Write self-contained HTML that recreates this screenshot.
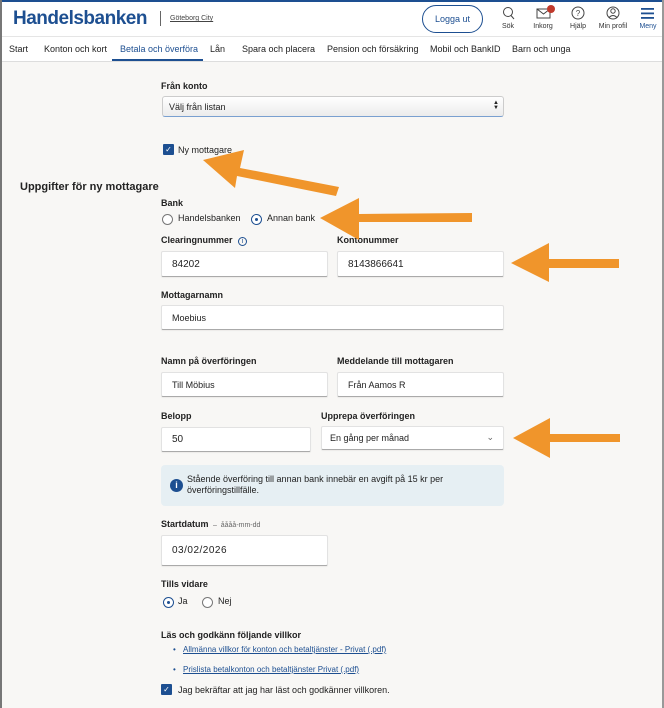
<!DOCTYPE html>
<html><head><meta charset="utf-8"><style>
*{margin:0;padding:0;box-sizing:border-box}
body{width:664px;height:708px;overflow:hidden;background:#f8f7f5;font-family:"Liberation Sans",Arial,sans-serif;color:#222;position:relative}
.a{position:absolute;white-space:nowrap}
.hdr{left:0;top:0;width:664px;height:37px;background:#fff;border-top:2px solid #1d4f91;border-bottom:1px solid #e5e5e5}
.nav{left:0;top:37px;width:664px;height:25px;background:#fff;border-bottom:1px solid #ddd;font-size:9px}
.lbl{font-size:9px;font-weight:bold;color:#222}
.inp{background:#fff;border:1px solid #e2e2e2;border-bottom:1px solid #aaa;border-radius:2px;font-size:10px;padding-left:10px;display:flex;align-items:center;box-shadow:0 1px 1px rgba(0,0,0,.05)}
.ic{font-size:7px;color:#333;text-align:center;width:40px}
.rad{width:11px;height:11px;border:1px solid #777;border-radius:50%;background:#fff}
.rad.on{border-color:#1d4f91}
.rad.on::after{content:"";position:absolute;left:3px;top:3px;width:3px;height:3px;border-radius:50%;background:#1d4f91}
.cb{width:11px;height:11px;background:#1d4f91;border-radius:1px;color:#fff;font-size:8px;line-height:11px;text-align:center}
.lnk{font-size:8px;color:#1d4f91;text-decoration:underline}
</style></head><body>
<div class="a" style="left:0;top:0;width:2px;height:708px;background:#777;z-index:5"></div>
<div class="a" style="right:0;top:0;width:2px;height:708px;background:#999;z-index:5"></div>
<div class="a hdr"></div>
<div class="a" style="left:13px;top:8px;font-size:19px;font-weight:bold;color:#1d4f91;letter-spacing:-0.5px">Handelsbanken</div>
<div class="a" style="left:160px;top:11px;width:1px;height:15px;background:#666"></div>
<div class="a" style="left:170px;top:15px;font-size:7px;color:#444;text-decoration:underline">Göteborg City</div>
<div class="a" style="left:422px;top:5px;width:61px;height:28px;border:1px solid #1d4f91;border-radius:14px;font-size:9px;color:#1d4f91;text-align:center;line-height:26px">Logga ut</div>
<svg class="a" style="left:0;top:0" width="664" height="37">
<circle cx="508" cy="12" r="4.5" fill="none" stroke="#444" stroke-width="1"/><line x1="511" y1="15.5" x2="514" y2="19" stroke="#444"/>
<rect x="537" y="9" width="13" height="9" fill="none" stroke="#444"/><polyline points="537,9 543.5,14 550,9" fill="none" stroke="#444"/><circle cx="551" cy="9" r="4" fill="#c0392b"/>
<circle cx="578" cy="13" r="6" fill="none" stroke="#444"/><text x="578" y="16" font-size="8" text-anchor="middle" fill="#444" font-family="Liberation Sans">?</text>
<circle cx="613" cy="13" r="6" fill="none" stroke="#444"/><circle cx="613" cy="11" r="2.2" fill="none" stroke="#444"/><path d="M609 17.5q4-4 8 0" fill="none" stroke="#444"/>
<rect x="641" y="8" width="13" height="1.8" fill="#1d4f91"/><rect x="641" y="12.5" width="13" height="1.8" fill="#1d4f91"/><rect x="641" y="17" width="13" height="1.8" fill="#1d4f91"/>
</svg>
<div class="a ic" style="left:488px;top:23px">Sök</div>
<div class="a ic" style="left:523px;top:23px">Inkorg</div>
<div class="a ic" style="left:558px;top:23px">Hjälp</div>
<div class="a ic" style="left:593px;top:23px">Min profil</div>
<div class="a ic" style="left:628px;top:23px;color:#1d4f91">Meny</div>
<div class="a nav"></div>
<div class="a" style="top:44px;left:0;font-size:9px;width:664px">
<span class="a" style="left:9px">Start</span><span class="a" style="left:44px">Konton och kort</span><span class="a" style="left:120px;color:#1d4f91">Betala och överföra</span><span class="a" style="left:210px">Lån</span><span class="a" style="left:242px">Spara och placera</span><span class="a" style="left:327px">Pension och försäkring</span><span class="a" style="left:430px">Mobil och BankID</span><span class="a" style="left:512px">Barn och unga</span></div>
<div class="a" style="left:112px;top:59px;width:91px;height:2px;background:#1d4f91"></div>

<div class="a lbl" style="left:161px;top:81px">Från konto</div>
<div class="a" style="left:162px;top:96px;width:342px;height:21px;background:linear-gradient(#fff,#ececec);border:1px solid #ccc;border-bottom:1px solid #7aa0d0;border-radius:3px;font-size:9px;padding:5px 6px">Välj från listan<span style="position:absolute;right:4px;top:4px;font-size:6px;line-height:5px">▲<br>▼</span></div>
<div class="a cb" style="left:163px;top:144px">✓</div>
<div class="a" style="left:178px;top:145px;font-size:9px">Ny mottagare</div>
<div class="a" style="left:20px;top:181px;font-size:11px;font-weight:bold">Uppgifter för ny mottagare</div>
<div class="a lbl" style="left:161px;top:198px">Bank</div>
<div class="a rad" style="left:162px;top:214px"></div><div class="a" style="left:178px;top:213px;font-size:9px">Handelsbanken</div>
<div class="a rad on" style="left:251px;top:214px"></div><div class="a" style="left:267px;top:213px;font-size:9px">Annan bank</div>
<div class="a lbl" style="left:161px;top:235px">Clearingnummer <span style="display:inline-block;width:9px;height:9px;border:1px solid #1d4f91;border-radius:50%;color:#1d4f91;font-size:7px;line-height:7px;text-align:center;font-weight:normal;margin-left:3px">i</span></div>
<div class="a lbl" style="left:337px;top:235px">Kontonummer</div>
<div class="a inp" style="left:161px;top:251px;width:167px;height:26px">84202</div>
<div class="a inp" style="left:337px;top:251px;width:167px;height:26px">8143866641</div>
<div class="a lbl" style="left:161px;top:290px">Mottagarnamn</div>
<div class="a inp" style="left:161px;top:305px;width:343px;height:25px;font-size:9px">Moebius</div>
<div class="a lbl" style="left:161px;top:356px">Namn på överföringen</div>
<div class="a lbl" style="left:337px;top:356px">Meddelande till mottagaren</div>
<div class="a inp" style="left:161px;top:372px;width:167px;height:25px;font-size:9px">Till Möbius</div>
<div class="a inp" style="left:337px;top:372px;width:167px;height:25px;font-size:9px">Från Aamos R</div>
<div class="a lbl" style="left:161px;top:411px">Belopp</div>
<div class="a lbl" style="left:321px;top:411px">Upprepa överföringen</div>
<div class="a inp" style="left:161px;top:427px;width:150px;height:25px">50</div>
<div class="a inp" style="left:321px;top:426px;width:183px;height:24px;font-size:9px;padding-left:8px">En gång per månad<span style="position:absolute;right:9px;top:5px;font-size:9px;color:#666">⌄</span></div>
<div class="a" style="left:161px;top:465px;width:343px;height:41px;background:#e6eff3;border-radius:4px"></div>
<div class="a" style="left:170px;top:479px;width:13px;height:13px;border-radius:50%;background:#1d4f91;color:#fff;font-size:9px;font-weight:bold;text-align:center;line-height:13px">i</div>
<div class="a" style="left:187px;top:474px;font-size:9px;line-height:11px">Stående överföring till annan bank innebär en avgift på 15 kr per<br>överföringstillfälle.</div>
<div class="a lbl" style="left:161px;top:519px">Startdatum <span style="font-weight:normal;font-size:7px;color:#666">&nbsp;–&nbsp; åååå-mm-dd</span></div>
<div class="a inp" style="left:161px;top:535px;width:167px;height:31px;font-size:10px;letter-spacing:.5px">03/02/2026</div>
<div class="a lbl" style="left:161px;top:579px">Tills vidare</div>
<div class="a rad on" style="left:163px;top:597px"></div><div class="a" style="left:178px;top:596px;font-size:9px">Ja</div>
<div class="a rad" style="left:202px;top:597px"></div><div class="a" style="left:218px;top:596px;font-size:9px">Nej</div>
<div class="a lbl" style="left:161px;top:630px">Läs och godkänn följande villkor</div>
<div class="a" style="left:173px;top:645px;font-size:8px;color:#1d4f91">•</div>
<div class="a lnk" style="left:183px;top:645px">Allmänna villkor för konton och betaltjänster - Privat (.pdf)</div>
<div class="a" style="left:173px;top:665px;font-size:8px;color:#1d4f91">•</div>
<div class="a lnk" style="left:183px;top:665px">Prislista betalkonton och betaltjänster Privat (.pdf)</div>
<div class="a cb" style="left:161px;top:684px">✓</div>
<div class="a" style="left:178px;top:685px;font-size:9px">Jag bekräftar att jag har läst och godkänner villkoren.</div>

<svg class="a" style="left:0;top:0;z-index:4" width="664" height="708">
<g fill="#f0952b">
<polygon points="203,160 244,150 240,168 339,187 336,196 237,176 235,188"/>
<polygon points="320,218 359,198 359,214 472,213 472,222 359,222 359,240"/>
<polygon points="511,263 549,243 549,259 619,259 619,268 549,268 549,282"/>
<polygon points="513,438 550,418 550,434 620,434 620,442 550,442 550,458"/>
</g></svg>
</body></html>
